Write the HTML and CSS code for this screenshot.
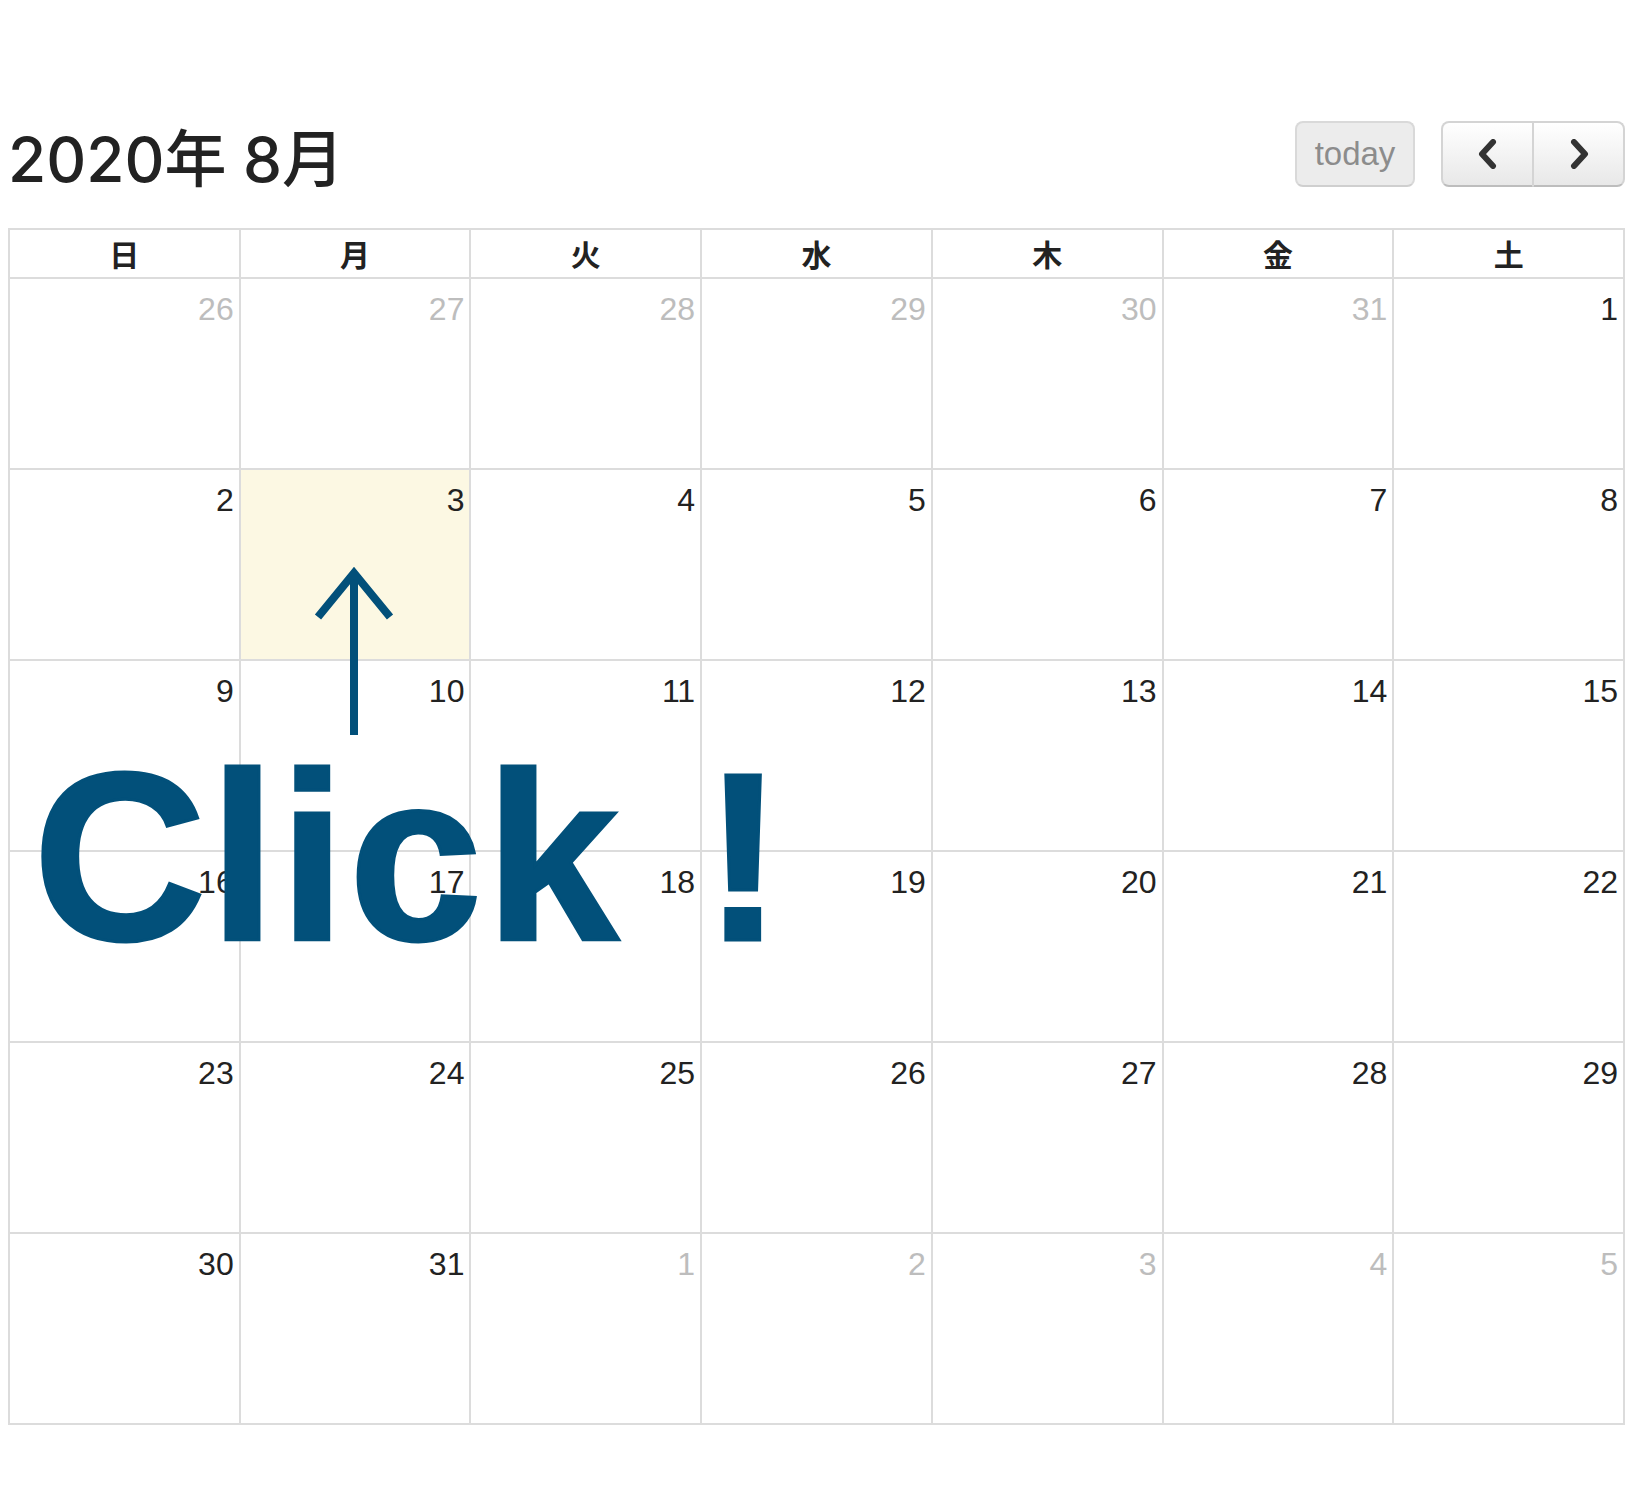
FILE: index.html
```html
<!DOCTYPE html>
<html lang="ja">
<head>
<meta charset="utf-8">
<title>2020年 8月</title>
<link rel="stylesheet" href="styles.css">
</head>
<body>
<div class="page">
  <div class="toolbar">
    <h2 class="title">2020年 8月</h2>
    <div class="actions">
      <button class="btn btn-today" type="button">today</button>
      <div class="nav">
        <button class="btn nav-btn nav-prev" type="button" aria-label="prev">
          <svg width="24" height="30" viewBox="0 0 24 30"><polyline points="17,3 6,15 17,27" fill="none" stroke="#333" stroke-width="6" stroke-linecap="round" stroke-linejoin="round"/></svg>
        </button>
        <button class="btn nav-btn nav-next" type="button" aria-label="next">
          <svg width="24" height="30" viewBox="0 0 24 30"><polyline points="7,3 18,15 7,27" fill="none" stroke="#333" stroke-width="6" stroke-linecap="round" stroke-linejoin="round"/></svg>
        </button>
      </div>
    </div>
  </div>

  <div class="cal">
    <div class="head">日</div><div class="head">月</div><div class="head">火</div><div class="head">水</div><div class="head">木</div><div class="head">金</div><div class="head">土</div>

    <div class="day other">26</div><div class="day other">27</div><div class="day other">28</div><div class="day other">29</div><div class="day other">30</div><div class="day other">31</div><div class="day">1</div>

    <div class="day">2</div><div class="day today">3</div><div class="day">4</div><div class="day">5</div><div class="day">6</div><div class="day">7</div><div class="day">8</div>

    <div class="day">9</div><div class="day">10</div><div class="day">11</div><div class="day">12</div><div class="day">13</div><div class="day">14</div><div class="day">15</div>

    <div class="day">16</div><div class="day">17</div><div class="day">18</div><div class="day">19</div><div class="day">20</div><div class="day">21</div><div class="day">22</div>

    <div class="day">23</div><div class="day">24</div><div class="day">25</div><div class="day">26</div><div class="day">27</div><div class="day">28</div><div class="day">29</div>

    <div class="day">30</div><div class="day">31</div><div class="day other">1</div><div class="day other">2</div><div class="day other">3</div><div class="day other">4</div><div class="day other">5</div>
  </div>

  <svg class="arrow" width="100" height="190" viewBox="0 0 100 190">
    <line x1="46" y1="14" x2="46" y2="175" stroke="#02507a" stroke-width="8"/>
    <polyline points="10,57 46,13 82,57" fill="none" stroke="#02507a" stroke-width="8"/>
  </svg>
  <div class="click">Click !</div>
</div>
</body>
</html>
```

FILE: styles.css
```css
html, body {
  margin: 0;
  padding: 0;
  background: #fff;
}

body {
  font-family: "Liberation Sans", "Noto Sans CJK JP", Arial, sans-serif;
  color: #222;
}

.page {
  position: relative;
  width: 1617px;
  margin-left: 8px;
}

.toolbar {
  display: flex;
  justify-content: space-between;
  align-items: flex-start;
  padding-top: 121px;
  height: 66px;
  margin-bottom: 41px;
}

.title {
  margin: 6px 0 0 0;
  font-family: Inter, "Noto Sans CJK JP", sans-serif;
  font-size: 62px;
  line-height: 66px;
  font-weight: 500;
  color: #222;
}

.actions {
  display: flex;
  gap: 26px;
}

.btn {
  box-sizing: border-box;
  height: 66px;
  margin: 0;
  padding: 0;
  font-family: "Liberation Sans", Arial, sans-serif;
  cursor: pointer;
}

.btn-today {
  width: 120px;
  border: 2px solid #d9d9d9;
  border-bottom-color: #cfcfcf;
  border-radius: 8px;
  background: #ececec;
  color: #8c8c8c;
  font-size: 33px;
  line-height: 60px;
}

.nav {
  display: flex;
}

.nav-btn {
  width: 92px;
  display: flex;
  align-items: center;
  justify-content: center;
  border: 2px solid #d4d4d4;
  border-bottom-color: #bdbdbd;
  background: linear-gradient(#ffffff, #e8e8e8);
}

.nav-prev {
  border-radius: 8px 0 0 8px;
  border-right-width: 1px;
}

.nav-next {
  border-radius: 0 8px 8px 0;
  border-left-width: 1px;
}

.cal {
  display: grid;
  grid-template-columns: repeat(7, 1fr);
  border-top: 2px solid #dcdcdc;
  border-left: 2px solid #dcdcdc;
}

.head {
  height: 47px;
  line-height: 46px;
  border-right: 2px solid #dcdcdc;
  border-bottom: 2px solid #dcdcdc;
  text-align: center;
  font-family: "Noto Sans CJK JP", sans-serif;
  font-weight: bold;
  font-size: 30px;
  color: #222;
}

.day {
  box-sizing: border-box;
  height: 191px;
  padding: 10px 5px 0 0;
  border-right: 2px solid #dcdcdc;
  border-bottom: 2px solid #dcdcdc;
  text-align: right;
  font-size: 32px;
  line-height: 40px;
  color: #222;
}

.day.other {
  color: #bdbdbd;
}

.day.today {
  background: #fcf8e3;
}

.arrow {
  position: absolute;
  left: 300px;
  top: 560px;
}

.click {
  position: absolute;
  left: 25px;
  top: 737px;
  font-family: "Liberation Sans", Arial, sans-serif;
  font-weight: bold;
  font-size: 240px;
  line-height: 240px;
  letter-spacing: 3px;
  word-spacing: 12px;
  color: #02507a;
  -webkit-text-stroke: 3px #02507a;
  white-space: nowrap;
}
```
